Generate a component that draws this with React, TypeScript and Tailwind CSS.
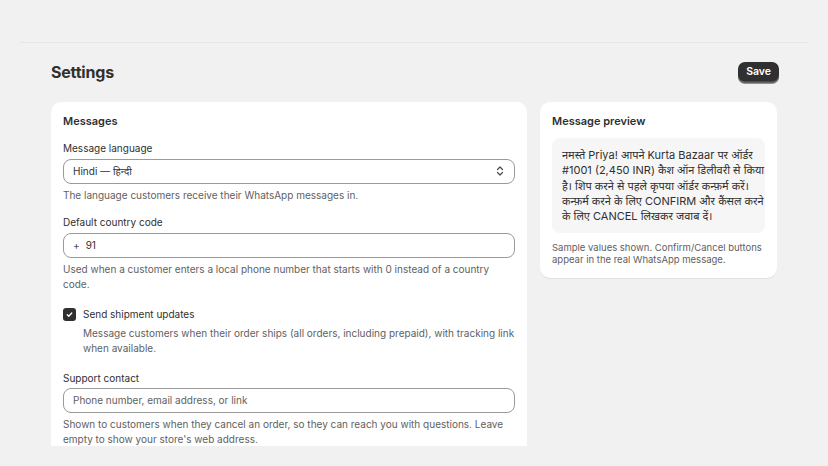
import React from "react";

const font = { fontFamily: "Inter, 'Noto Sans', 'Noto Sans Devanagari', sans-serif" };

function Chevrons() {
  return (
    <svg width="10" height="12" viewBox="0 0 10 12" fill="none" stroke="#4a4a4a" strokeWidth="1.2" strokeLinecap="round" strokeLinejoin="round">
      <path d="M2.5 4.5 L5 2 L7.5 4.5" />
      <path d="M2.5 7.5 L5 10 L7.5 7.5" />
    </svg>
  );
}

export default function App() {
  return (
    <div className="h-[466px] w-full overflow-hidden bg-[#f1f1f1] text-[#303030]" style={font}>
      <div className="px-[20px] pt-[42px]">
        <div className="border-t border-[#e6e6e6]" />
      </div>
      <div className="h-[403px] overflow-hidden px-[51px] pr-[50px]">
        <div className="flex items-center justify-between pt-[18px]">
          <h1 className="text-[16px] font-bold leading-[22px] tracking-[-0.2px]">Settings</h1>
          <button className="mr-[-1px] h-[21px] rounded-[7px] bg-[#303030] px-[8px] text-[10.5px] font-semibold text-white shadow-[inset_0_-1.5px_0_rgba(255,255,255,0.25),0_1px_0_rgba(0,0,0,0.4)]">
            Save
          </button>
        </div>
        <div className="mt-[19px] flex items-start gap-[13px]">
          <div className="w-[476px] rounded-[10px] bg-white px-[12px] pb-[20px] pt-[10px] shadow-[0_1px_0_rgba(0,0,0,0.07)]">
            <h2 className="text-[11px] font-semibold leading-[18px]">Messages</h2>
            <div className="mt-[11px] text-[10px] leading-[15px]">Message language</div>
            <div className="mt-[2.5px] flex h-[25px] items-center justify-between rounded-[8px] border border-[#9a9a9a] px-[9px] text-[10px]">
              <span>Hindi — हिन्दी</span>
              <Chevrons />
            </div>
            <p className="mt-[4.5px] text-[10px] leading-[15px] text-[#616161]">
              The language customers receive their WhatsApp messages in.
            </p>

            <div className="mt-[12px] text-[10px] leading-[15px]">Default country code</div>
            <div className="mt-[3px] flex h-[25px] items-center rounded-[8px] border border-[#9a9a9a] px-[9px] text-[10px]">
              <span className="text-[#4a4a4a]">+</span>
              <span className="ml-[6px]">91</span>
            </div>
            <p className="mt-[3.5px] text-[10px] leading-[15px] text-[#616161]">
              Used when a customer enters a local phone number that starts with 0 instead of a country code.
            </p>

            <div className="mt-[15px] flex items-center gap-[7px]">
              <span className="flex h-[13px] w-[13px] items-center justify-center rounded-[3px] bg-[#303030]">
                <svg width="9" height="9" viewBox="0 0 10 10" fill="none" stroke="white" strokeWidth="1.5" strokeLinecap="round" strokeLinejoin="round">
                  <path d="M2.5 5.2 L4.2 6.9 L7.5 3.3" />
                </svg>
              </span>
              <span className="text-[10px] leading-[15px]">Send shipment updates</span>
            </div>
            <p className="ml-[20px] mt-[4px] text-[10px] leading-[15px] text-[#616161]">
              Message customers when their order ships (all orders, including prepaid), with tracking link when available.
            </p>

            <div className="mt-[15.5px] text-[10px] leading-[15px]">Support contact</div>
            <div className="mt-[2px] flex h-[25px] items-center rounded-[8px] border border-[#9a9a9a] px-[9px] text-[10px] text-[#616161]">
              Phone number, email address, or link
            </div>
            <p className="mt-[3.5px] text-[10px] leading-[15px] text-[#616161]">
              Shown to customers when they cancel an order, so they can reach you with questions. Leave empty to show your store's web address.
            </p>
          </div>

          <div className="w-[237px] rounded-[10px] bg-white px-[12px] pb-[13px] pt-[10px] shadow-[0_1px_0_rgba(0,0,0,0.07)]">
            <h2 className="text-[11px] font-semibold leading-[18px]">Message preview</h2>
            <div className="mt-[8px] whitespace-nowrap rounded-[8px] bg-[#f6f6f6] px-[10px] pb-[9px] pt-[10px] text-[11px] leading-[15.3px]">
              नमस्ते Priya! आपने Kurta Bazaar पर ऑर्डर
              <br />
              #1001 (2,450 INR) कैश ऑन डिलीवरी से किया
              <br />
              है। शिप करने से पहले कृपया ऑर्डर कन्फ़र्म करें।
              <br />
              कन्फ़र्म करने के लिए CONFIRM और कैंसल करने
              <br />
              के लिए CANCEL लिखकर जवाब दें।
            </div>
            <p className="mt-[9px] text-[9.5px] leading-[11.5px] text-[#616161]">
              Sample values shown. Confirm/Cancel buttons appear in the real WhatsApp message.
            </p>
          </div>
        </div>
      </div>
    </div>
  );
}
